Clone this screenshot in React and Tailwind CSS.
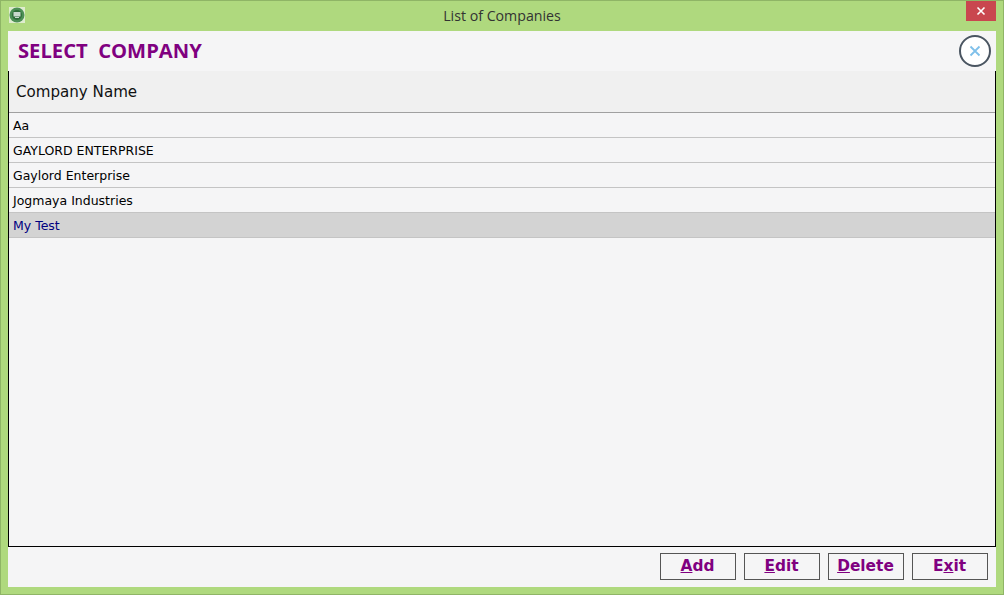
import React from 'react';

const companies = ['Aa', 'GAYLORD ENTERPRISE', 'Gaylord Enterprise', 'Jogmaya Industries', 'My Test'];
const selected = 'My Test';

const buttons = [
  { key: 'add', first: '', mark: 'A', rest: 'dd' },
  { key: 'edit', first: '', mark: 'E', rest: 'dit' },
  { key: 'delete', first: '', mark: 'D', rest: 'elete' },
  { key: 'exit', first: 'E', mark: 'x', rest: 'it' },
];

function AppIcon() {
  return (
    <div className="w-4 h-4 bg-[#dfeccf] flex items-center justify-center">
      <svg width="16" height="16" viewBox="0 0 16 16">
        <circle cx="8" cy="8" r="7.5" fill="#4c8f55" />
        <circle cx="8" cy="8" r="5" fill="#2f6d3a" />
        <rect x="4.5" y="5" width="7" height="4.5" rx="0.5" fill="#c9d8cd" />
        <rect x="6" y="10" width="4" height="1" fill="#c9d8cd" />
      </svg>
    </div>
  );
}

export default function App() {
  return (
    <div className="w-[1004px] h-[595px] flex flex-col bg-[#afd97e] border border-[#8fb566] font-['Liberation_Sans',sans-serif] overflow-hidden">
      {/* window title bar */}
      <div className="h-[30px] flex items-start shrink-0">
        <div className="pl-[8px] pt-[6px] w-[60px]">
          <AppIcon />
        </div>
        <div className="flex-1 text-center text-[14.2px] leading-[29px] text-[#333] font-['Open_Sans',sans-serif]">
          List of Companies
        </div>
        <div className="w-[60px] flex justify-end pr-[7px]">
          <div className="w-[30px] h-[20px] bg-[#c9474f] flex items-center justify-center">
            <svg width="10" height="10" viewBox="0 0 10 10">
              <path d="M1.5 1.5 L8.5 8.5 M8.5 1.5 L1.5 8.5" stroke="#fff" strokeWidth="1.6" />
            </svg>
          </div>
        </div>
      </div>

      <div className="flex-1 mx-[7px] mb-[7px] bg-[#f5f5f6] flex flex-col min-h-0">
        {/* heading */}
        <div className="h-[40px] shrink-0 flex items-center justify-between pl-[10px] pr-[5px]">
          <div className="text-[20.2px] font-bold text-[#800080] font-['Open_Sans',sans-serif] whitespace-pre pb-[2px]">SELECT  COMPANY</div>
          <div className="w-[32px] h-[32px] rounded-full border-2 border-[#4a5561] bg-white flex items-center justify-center">
            <svg width="12" height="12" viewBox="0 0 12 12">
              <path d="M1.5 1.5 L10.5 10.5 M10.5 1.5 L1.5 10.5" stroke="#7fc0ea" strokeWidth="1.8" />
            </svg>
          </div>
        </div>

        {/* company list */}
        <div className="flex-1 min-h-0 border-l border-r border-b border-black font-['DejaVu_Sans',sans-serif]">
          <div className="h-[42px] flex items-center pl-[7px] pt-[2px] bg-[#f0f0f0] border-b border-[#a0a0a0] text-[15.1px] text-[#111]">
            Company Name
          </div>
          {companies.map((name) => (
            <div
              key={name}
              className={
                name === selected
                  ? 'h-[25px] flex items-center pl-[4px] pt-[2px] border-b border-[#c4c4c4] text-[12.5px] bg-[#d3d3d3] text-[#000080]'
                  : 'h-[25px] flex items-center pl-[4px] pt-[2px] border-b border-[#c4c4c4] text-[12.5px] text-black'
              }
            >
              {name}
            </div>
          ))}
        </div>

        {/* actions */}
        <div className="h-[40px] shrink-0 flex justify-end items-start gap-[8px] pt-[6px] pr-[8px] font-['DejaVu_Sans',sans-serif]">
          {buttons.map((b) => (
            <button
              key={b.key}
              className="w-[76px] h-[27px] border border-[#555] bg-[#f5f5f6] text-[15.4px] font-bold text-[#800080] flex items-center justify-center pr-[1px]"
            >
              {b.first}
              <span className="underline">{b.mark}</span>
              {b.rest}
            </button>
          ))}
        </div>
      </div>
    </div>
  );
}
